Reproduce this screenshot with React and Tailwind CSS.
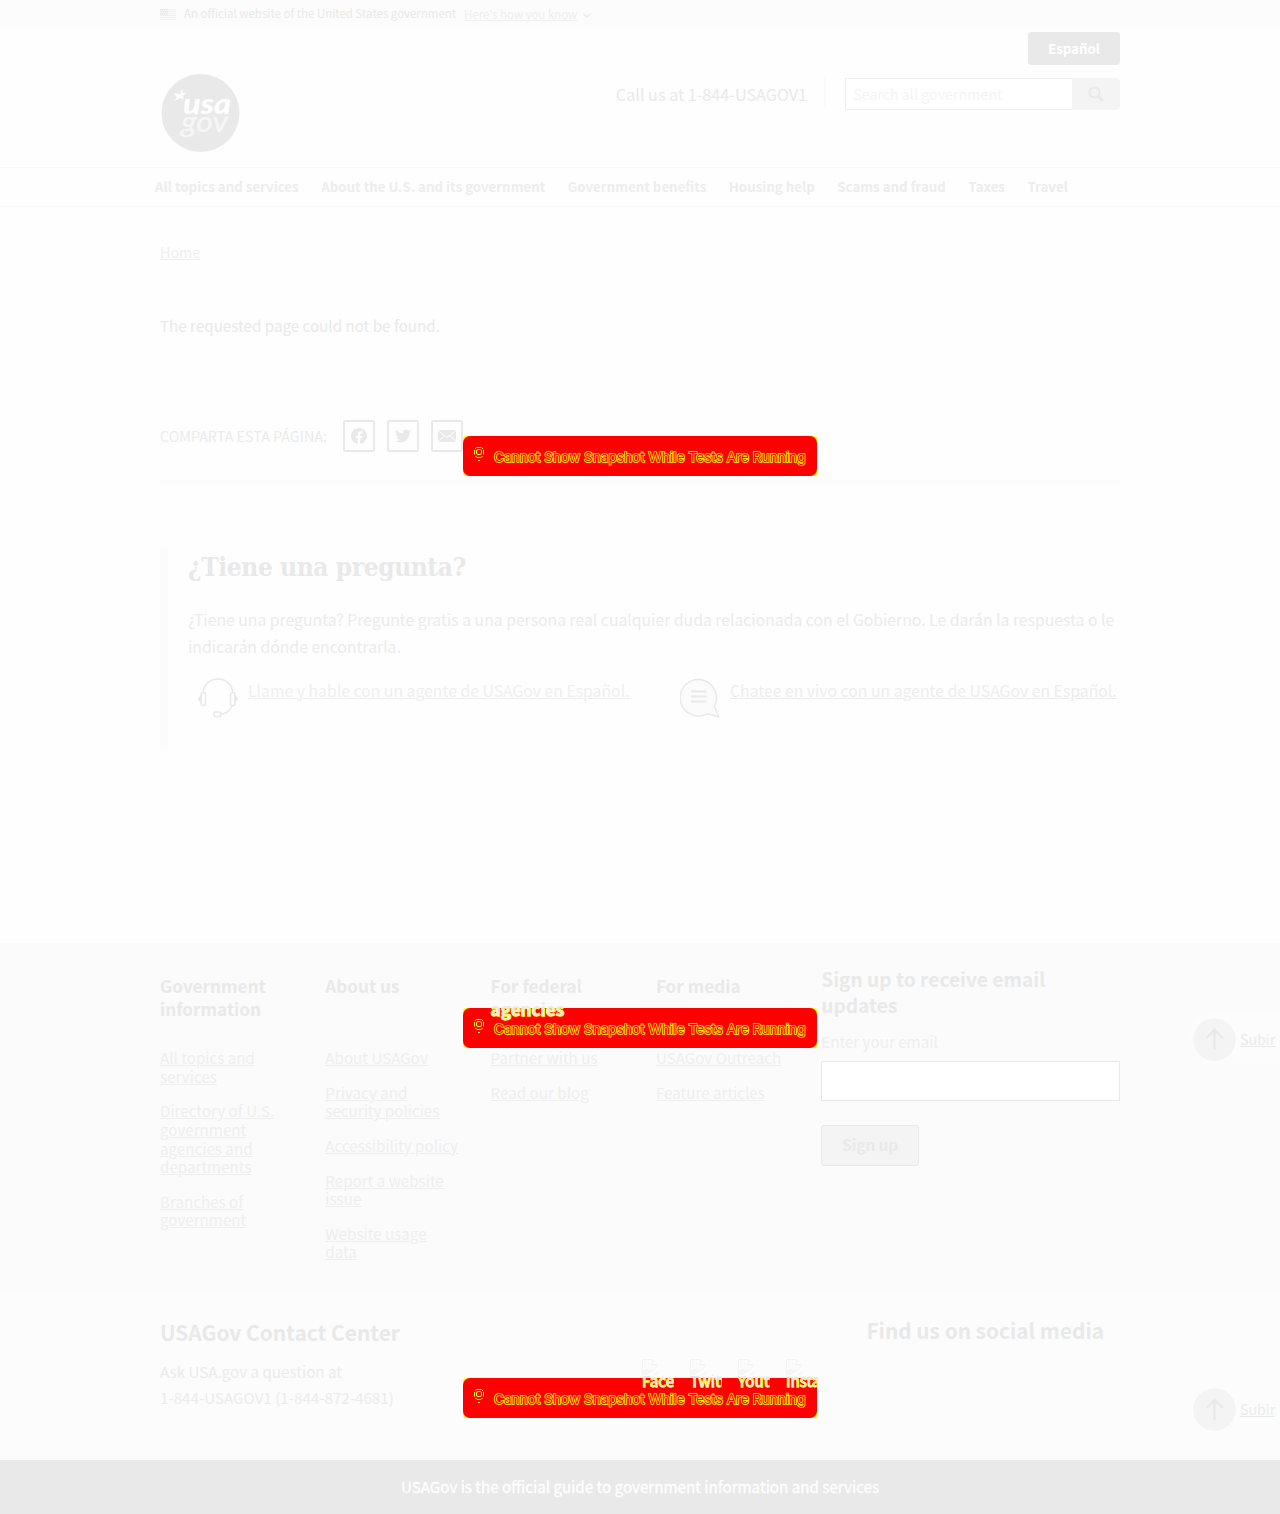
import React from "react";

function Toast({ className }) {
  return (
    <div className={`absolute left-[463px] h-10 w-[354px] rounded-[3px] bg-[#ffff00] ${className}`}>
      <div className="flex h-full w-full items-center rounded-[7px] bg-[#ff0000] pl-[10px]">
        <svg className="mb-1 h-4 w-[12px]" viewBox="0 0 12 16" fill="none" stroke="#ffff00" strokeWidth="1">
          <path d="M3.500 1.500h5M1.500 4v4.500M10.500 4v4.500M2.500 10l1.500 1.500h4l1.500-1.500M2 3l1.500-1.500M10 3l-1.500-1.500" />
          <rect x="3.500" y="3.500" width="5" height="5" rx="1.500" />
          <path d="M5 14.500h2" />
        </svg>
        <span className="ml-[9px] mt-[2px] whitespace-nowrap font-['Inter',sans-serif] text-[13.650px] leading-5 text-[#ff0000] [-webkit-text-stroke:1.500px_#ffff00] [paint-order:stroke_fill]">
          Cannot Show Snapshot While Tests Are Running
        </span>
      </div>
    </div>
  );
}

function Subir({ className }) {
  return (
    <div className={`absolute left-[1189px] flex h-[52px] w-[91px] items-center rounded-l-[24px] bg-[#fcfcfc] pl-1 ${className}`}>
      <svg className="h-[43px] w-[43px]" viewBox="0 0 43 43">
        <circle cx="21.500" cy="21.500" r="21.300" fill="#f4f4f4" />
        <path d="M21.500 32V12M13.500 20l8-8 8 8" fill="none" stroke="#e9e9e9" strokeWidth="2.300" />
      </svg>
      <a className="ml-1 text-[14.200px] leading-5 text-[#ebebeb] underline underline-offset-[1px]">Subir</a>
    </div>
  );
}

function FooterColumn({ title, links, className = "" }) {
  return (
    <div className={`w-[165.400px] ${className}`}>
      <h3 className="h-[74px] text-[17.150px] font-bold leading-[23px] text-[#e9e9e9]">{title}</h3>
      <ul className="flex flex-col gap-4 pr-7">
        {links.map((lines) => (
          <li key={lines[0]} className="whitespace-nowrap text-[15.180px] leading-[18.640px] text-[#eeeeee]">
            <a className="underline underline-offset-[1px]">
              {lines.map((line, i) => (
                <React.Fragment key={line}>
                  {i > 0 && <br />}
                  {line}
                </React.Fragment>
              ))}
            </a>
          </li>
        ))}
      </ul>
    </div>
  );
}

function BrokenImage({ children }) {
  return (
    <div className="h-8 w-8 overflow-hidden">
      <svg className="block h-4 w-4" viewBox="0 0 16 16">
        <path d="M.500.500h10l5 5v10H.500z" fill="#fbfbfb" stroke="#f3f3f3" />
        <path d="M10.500.500v5h5" fill="#fefefe" stroke="#f3f3f3" />
        <path d="M1 12l4-3 4 3 6-5v3l-7 6H1z" fill="#f5f5f5" />
        <path d="M6 16l10-8v3l-5 5z" fill="#fefefe" />
      </svg>
      <div className="-mt-[3px] flex whitespace-nowrap text-[15.200px] leading-4 text-[#e6e6f0]">{children}</div>
    </div>
  );
}

const outline =
  "relative isolate inline-block before:absolute before:left-0 before:top-0 before:-z-10 before:text-[#ffff00] before:[-webkit-text-stroke:1.300px_#ffff00]";

export default function App() {
  return (
    <div className="relative h-[1514px] w-[1280px] overflow-hidden bg-[#fefefe] font-['Noto_Sans_CJK_SC',sans-serif] text-[#e9e9e9]">
      <div className="flex h-[27px] items-center bg-[#fcfcfc] pl-40">
        <svg className="mt-[2px] h-[11px] w-4" viewBox="0 0 16 11">
          <path d="M0 .500h16M0 2.500h16M0 4.500h16M0 6.500h16M0 8.500h16M0 10.500h16" stroke="#f0f0f0" />
          <rect width="8" height="6" fill="#ebebeb" />
          <path d="M1 1.500h7M0 3.500h7M1 5h7" stroke="#f8f8f8" strokeDasharray="1 1" />
        </svg>
        <span className="-mt-px ml-2 w-[272px] whitespace-nowrap text-[11.480px] leading-4">An official website of the United States government</span>
        <a className="ml-2 mt-px whitespace-nowrap text-[11.430px] leading-4 text-[#eeeeee] underline underline-offset-[1px]">Here's how you know</a>
        <svg className="ml-[6px] mt-[3px] h-[5px] w-[8px]" viewBox="0 0 8 5" fill="none" stroke="#ebebeb" strokeWidth="1.400">
          <path d="M.500.700L4 4.100 7.500.700" />
        </svg>
      </div>

      <header className="flex h-[140px] justify-between px-40">
        <svg className="mt-[46px] h-20 w-20" viewBox="0 0 80 80">
          <circle cx="40.500" cy="40" r="39" fill="#e9e9e9" />
          <path d="M14 20.500l6 .400L22 15l1 5 4-.400-4 3.200.500 4-3-2-6.500 3.200 3-3.600z" fill="#fefefe" />
          <text x="23" y="41" fontFamily="Lato, sans-serif" fontSize="29" fontWeight="900" fontStyle="italic" textLength="48" lengthAdjust="spacingAndGlyphs" fill="#fefefe">usa</text>
          <text x="21" y="59" fontFamily="Lato, sans-serif" fontSize="28.500" fontStyle="italic" textLength="47" lengthAdjust="spacingAndGlyphs" fill="#f6f6f6" stroke="#f6f6f6" strokeWidth="0.400">gov</text>
        </svg>
        <div className="flex flex-col items-end pt-[5px]">
          <button className="h-[33px] w-[92px] rounded-[4px] bg-[#e9e9e9] text-[13.300px] font-bold leading-[33px] text-white">Español</button>
          <div className="mt-[13px] flex h-8">
            <span className="whitespace-nowrap text-[16.200px] leading-8">Call us at 1-844-USAGOV1</span>
            <span className="-mt-[2px] ml-[17px] h-8 w-[2px] bg-[#fafafa]" />
            <div className="ml-[19px] h-8 w-[227px] border border-r-0 border-[#efefef] bg-white pl-[7px] text-[14.300px] leading-[30px] text-[#f4f4f4]">Search all government</div>
            <button className="flex h-8 w-12 items-center justify-center rounded-r-[4px] bg-[#f4f4f4]">
              <svg className="h-4 w-4" viewBox="0 0 16 16" fill="none" stroke="#e9e9e9" strokeWidth="2">
                <circle cx="6.500" cy="6.500" r="5" />
                <path d="M10 10l5 5" strokeWidth="2.500" />
              </svg>
            </button>
          </div>
        </div>
      </header>

      <nav className="flex h-10 items-center gap-[22.500px] whitespace-nowrap border-y border-[#f8f8f8] pl-[155px] text-[13.310px] font-bold leading-5 text-[#ededed]">
        <a>All topics and services</a>
        <a>About the U.S. and its government</a>
        <a>Government benefits</a>
        <a>Housing help</a>
        <a>Scams and fraud</a>
        <a>Taxes</a>
        <a>Travel</a>
      </nav>

      <main className="h-[736px] px-40 pt-[35px]">
        <div className="text-[14.300px] leading-5 text-[#eeeeee]">
          <a className="underline underline-offset-[1px]">Home</a>
        </div>
        <p className="mt-[53px] text-[15.180px] leading-5">The requested page could not be found.</p>
        <div className="mt-[85px] flex h-[64px] border-b-4 border-[#fbfbfb]">
          <span className="w-[183px] whitespace-nowrap text-[14.320px] leading-8 text-[#ebebeb]">COMPARTA ESTA PÁGINA:</span>
          <div className="flex gap-3">
            <span className="flex h-8 w-8 items-center justify-center rounded-[2px] border-2 border-[#e9e9e9]">
              <svg className="h-4 w-4" viewBox="0 0 24 24" fill="#e9e9e9"><path d="M24 12.073C24 5.446 18.627.073 12 .073S0 5.446 0 12.073c0 5.990 4.388 10.954 10.125 11.854v-8.385H7.078v-3.470h3.047V9.430c0-3.007 1.792-4.669 4.533-4.669 1.312 0 2.686.235 2.686.235v2.953H15.830c-1.491 0-1.956.925-1.956 1.874v2.250h3.328l-.532 3.470h-2.796v8.385C19.612 23.027 24 18.062 24 12.073z" /></svg>
            </span>
            <span className="flex h-8 w-8 items-center justify-center rounded-[2px] border-2 border-[#e9e9e9]">
              <svg className="h-4 w-4" viewBox="0 0 24 24" fill="#e9e9e9"><path d="M23.953 4.570a10 10 0 01-2.825.775 4.958 4.958 0 002.163-2.723c-.951.555-2.005.959-3.127 1.184a4.920 4.920 0 00-8.384 4.482C7.690 8.095 4.067 6.130 1.640 3.162a4.822 4.822 0 00-.666 2.475c0 1.710.870 3.213 2.188 4.096a4.904 4.904 0 01-2.228-.616v.060a4.923 4.923 0 003.946 4.827 4.996 4.996 0 01-2.212.085 4.936 4.936 0 004.604 3.417 9.867 9.867 0 01-6.102 2.105c-.390 0-.779-.023-1.170-.067a13.995 13.995 0 007.557 2.209c9.053 0 13.998-7.496 13.998-13.985 0-.210 0-.420-.015-.630A9.935 9.935 0 0024 4.590z" /></svg>
            </span>
            <span className="flex h-8 w-8 items-center justify-center rounded-[2px] border-2 border-[#e9e9e9]">
              <svg className="h-3 w-[18px]" viewBox="0 0 18 12">
                <rect width="18" height="12" rx="1" fill="#e9e9e9" />
                <path d="M0 .500l9 7 9-7M0 11.500l6.500-6M18 11.500l-6.500-6" fill="none" stroke="#fefefe" />
              </svg>
            </span>
          </div>
        </div>

        <section className="mt-16 h-[202px] border-l-8 border-[#fbfbfb] pl-5">
          <h2 className="whitespace-nowrap pt-px font-['DejaVu_Serif',serif] text-[26px] font-bold leading-9 tracking-[-0.400px] [font-stretch:condensed]">¿Tiene una pregunta?</h2>
          <p className="mt-[21px] whitespace-nowrap text-[15.760px] leading-[27px] text-[#ebebeb]">
            ¿Tiene una pregunta? Pregunte gratis a una persona real cualquier duda relacionada con el Gobierno. Le darán la respuesta o le
            <br />
            indicarán dónde encontrarla.
          </p>
          <div className="mt-[18px] flex whitespace-nowrap text-[15.770px] leading-[25px] text-[#efefef]">
            <div className="flex w-[482px] pl-[10px]">
              <svg className="h-10 w-10" viewBox="0 0 40 40" fill="none" stroke="#e9e9e9" strokeWidth="1.500">
                <path d="M5 15C6 6 12 1 20 1s14 5 15 14M34 28c-2 5-6 8-12 8" />
                <rect x="3" y="14.500" width="4.500" height="13" rx="2" />
                <rect x="32.500" y="14.500" width="4.500" height="13" rx="2" />
                <rect x="16" y="34" width="7" height="4.500" rx="1.500" />
                <path d="M3 18l-2.500 3L3 24zM37 18l2.500 3-2.500 3z" fill="#e9e9e9" />
              </svg>
              <a className="ml-[10px] underline underline-offset-[1px]">Llame y hable con un agente de USAGov en Español.</a>
            </div>
            <div className="flex pl-[10px]">
              <svg className="h-10 w-10" viewBox="0 0 40 40">
                <path d="M34.300 28.500A18.200 18.200 0 1 0 27 35.800L38.800 38.800z" fill="#fbfbfb" stroke="#e9e9e9" strokeWidth="1.500" strokeLinejoin="round" />
                <path d="M11 13.500h15.500M11 18.500h15.500M11 23.500h15.500" stroke="#e9e9e9" strokeWidth="2" />
              </svg>
              <a className="ml-[10px] text-[#ededed] underline underline-offset-[1px]">Chatee en vivo con un agente de USAGov en Español.</a>
            </div>
          </div>
        </section>
      </main>

      <Toast className="top-[436px]" />
      <Toast className="top-[1008px]" />
      <Toast className="top-[1378px]" />

      <footer>
        <div className="flex h-[351px] bg-[#fbfbfb] px-40 pt-[31px]">
          <FooterColumn title={<>Government<br />information</>} links={[["All topics and", "services"], ["Directory of U.S.", "government", "agencies and", "departments"], ["Branches of", "government"]]} />
          <FooterColumn title="About us" links={[["About USAGov"], ["Privacy and", "security policies"], ["Accessibility policy"], ["Report a website", "issue"], ["Website usage", "data"]]} />
          <FooterColumn
            className="relative z-10"
            title={<>For federal<br /><span className={`${outline} before:content-['agencies'] before:[clip-path:inset(11px_-4px_-4px_-4px)]`}>agencies</span></>}
            links={[["Partner with us"], ["Read our blog"]]}
          />
          <FooterColumn title="For media" links={[["USAGov Outreach"], ["Feature articles"]]} />
          <div className="-mt-2 w-[299px]">
            <h3 className="text-[19.200px] font-bold leading-[26px]">Sign up to receive email<br />updates</h3>
            <label className="mt-[13px] block text-[15.200px] leading-5 text-[#eeeeee]">Enter your email</label>
            <div className="mt-[10px] h-10 w-full border border-[#e9e9e9] bg-white" />
            <button className="mt-6 h-[41px] w-[98px] rounded-[3px] border border-[#e9e9e9] bg-[#f4f4f4] pb-[2px] text-[15.200px] font-bold leading-[37px]">Sign up</button>
          </div>
        </div>
        <div className="flex h-[166px] justify-between bg-[#fcfcfc] px-40">
          <div className="pt-[23px]">
            <h3 className="text-[20.870px] font-bold leading-[30px]">USAGov Contact Center</h3>
            <p className="mt-[11px] whitespace-nowrap text-[15.180px] leading-[26px] text-[#ebebeb]">
              Ask USA.gov a question at
              <br />
              1-844-USAGOV1 (1-844-872-4681)
            </p>
          </div>
          <div className="flex w-[478px] flex-col pt-[21px]">
            <h3 className="mr-4 whitespace-nowrap text-right text-[20.800px] font-bold leading-[30px]">Find us on social media</h3>
            <div className="relative z-10 mt-[14px] flex gap-4">
              <BrokenImage><span className={`${outline} before:content-['Facebook'] before:[clip-path:inset(5px_-4px_-4px_-4px)]`}>Facebook</span></BrokenImage>
              <BrokenImage><span className={`${outline} before:content-['Twitter'] before:[clip-path:inset(5px_-4px_-4px_-4px)]`}>Twitter</span></BrokenImage>
              <BrokenImage><span className={`${outline} before:content-['Youtube'] before:[clip-path:inset(5px_-4px_-4px_-4px)]`}>Youtube</span></BrokenImage>
              <BrokenImage><span className={`${outline} before:content-['Instagram'] before:[clip-path:inset(5px_-4px_-4px_-4px)]`}>Instagram</span></BrokenImage>
            </div>
          </div>
        </div>
        <div className="h-[54px] bg-[#e9e9e9] text-center text-[15.180px] leading-[52px] text-white [-webkit-text-stroke:0.300px_white]">
          USAGov is the official guide to government information and services
        </div>
      </footer>

      <Subir className="top-[1013px]" />
      <Subir className="top-[1383px]" />
    </div>
  );
}
